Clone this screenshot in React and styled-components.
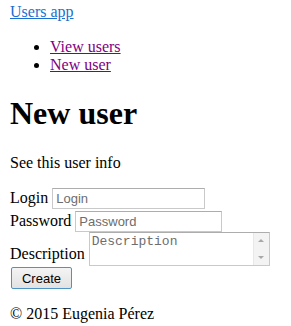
import React from 'react';
import styled, { createGlobalStyle } from 'styled-components';

const GlobalStyle = createGlobalStyle`
  body {
    margin: 0;
    background: #fff;
    font-family: "Liberation Serif", "Times New Roman", serif;
    font-size: 16px;
    line-height: 18px;
    color: #000;
  }
`

const Page = styled.div`
  padding: 3px 10px 0 10px;
`

const HomeLink = styled.a`
  color: #1a6fd0;
  text-decoration: underline;
`

const Nav = styled.ul`
  margin: 17px 0 0 0;
  padding-left: 40px;
  list-style: disc;
`

const NavLink = styled.a`
  color: #800080;
  text-decoration: underline;
`

const Title = styled.h1`
  font-size: 32px;
  line-height: 37px;
  font-weight: bold;
  margin: 21px 0 22px 0;
`

const Info = styled.p`
  margin: 0 0 16px 0;
`

const Form = styled.form`
  display: flex;
  flex-direction: column;
  align-items: flex-start;
`

const Row = styled.div`
  display: flex;
  align-items: ${p => (p.$bottom ? 'flex-end' : 'baseline')};
  gap: 4px;
  margin-bottom: ${p => p.$space || 0}px;
`

const Label = styled.label`
  margin-bottom: ${p => p.$drop || 0}px;
`

const Input = styled.input`
  box-sizing: border-box;
  width: ${p => p.$w}px;
  height: 21px;
  border: 1px solid #c9c9c9;
  border-top-color: #adadad;
  padding: 0 3px;
  font-family: "Liberation Sans", Arial, sans-serif;
  font-size: 13px;
  color: #000;
  outline: none;
  &::placeholder {
    color: #6d6d6d;
  }
`

const AreaBox = styled.div`
  box-sizing: border-box;
  display: flex;
  width: 181px;
  height: 34px;
  border: 1px solid #c9c9c9;
  border-top-color: #adadad;
  background: #fff;
`

const Area = styled.textarea`
  flex: 1;
  border: none;
  resize: none;
  padding: 1px 0 0 2px;
  margin: 0;
  font-family: "Liberation Mono", "Courier New", monospace;
  font-size: 13px;
  line-height: 15px;
  outline: none;
  overflow: hidden;
  &::placeholder {
    color: #6d6d6d;
  }
`

const ScrollTrack = styled.div`
  width: 16px;
  display: flex;
  flex-direction: column;
  justify-content: space-between;
  align-items: center;
  background: #f3f3f3;
  border-left: 1px solid #e8e8e8;
  padding: 3px 0;
  box-sizing: border-box;
`

const Arrow = styled.span`
  width: 0;
  height: 0;
  border-left: 3px solid transparent;
  border-right: 3px solid transparent;
  ${p => (p.$up ? 'border-bottom: 3px solid #a8a8a8;' : 'border-top: 3px solid #a8a8a8;')}
  margin: 3px 0;
`

const Button = styled.button`
  box-sizing: border-box;
  width: 61px;
  height: 22px;
  margin: 1px 0 0 1px;
  padding: 0;
  border: 1px solid #4d94c6;
  border-radius: 2px;
  background: linear-gradient(#f4f4f4, #e2e2e2);
  font-family: "Liberation Sans", Arial, sans-serif;
  font-size: 13px;
  color: #000;
`

const Footer = styled.footer`
  margin-top: 16px;
`

export default function App() {
  return (
    <Page>
      <GlobalStyle />
      <HomeLink href="#">Users app</HomeLink>
      <Nav>
        <li><NavLink href="#">View users</NavLink></li>
        <li><NavLink href="#">New user</NavLink></li>
      </Nav>
      <Title>New user</Title>
      <Info>See this user info</Info>
      <Form onSubmit={e => e.preventDefault()}>
        <Row $space={2}>
          <Label>Login</Label>
          <Input $w={153} placeholder="Login" />
        </Row>
        <Row>
          <Label>Password</Label>
          <Input $w={147} placeholder="Password" />
        </Row>
        <Row $bottom>
          <Label $drop={3}>Description</Label>
          <AreaBox>
            <Area placeholder="Description" />
            <ScrollTrack>
              <Arrow $up />
              <Arrow />
            </ScrollTrack>
          </AreaBox>
        </Row>
        <Button type="submit">Create</Button>
      </Form>
      <Footer>© 2015 Eugenia Pérez</Footer>
    </Page>
  );
}
